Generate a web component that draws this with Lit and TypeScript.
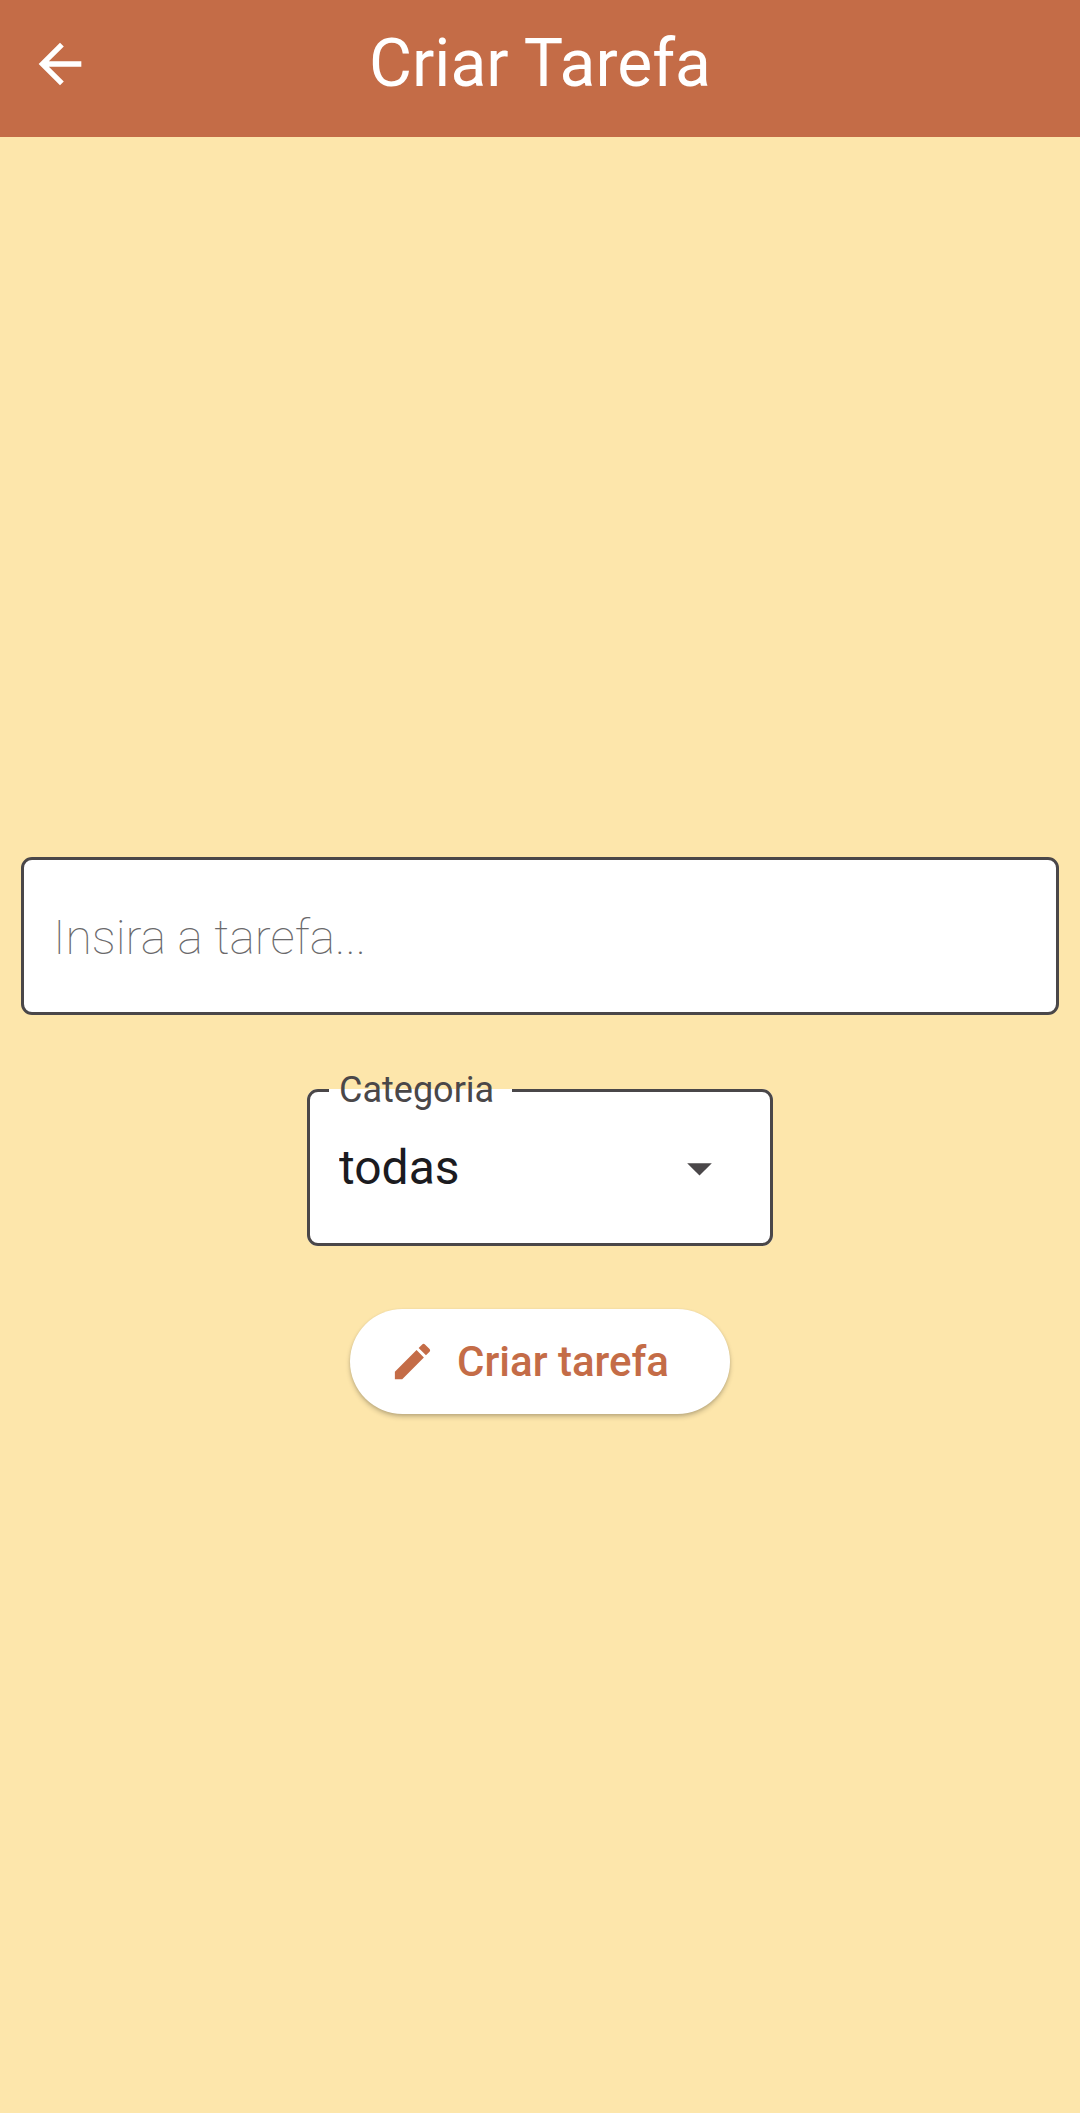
import { LitElement, html, css } from "lit";
import { customElement, state } from "lit/decorators.js";

@customElement("app-root")
export class AppRoot extends LitElement {
  static styles = css`
    :host {
      display: flex;
      flex-direction: column;
      min-height: 100vh;
      background: #fde6ab;
      color: #1b1b1f;
      font-family: Roboto, "Liberation Sans", sans-serif;
    }
    * {
      box-sizing: border-box;
    }
    .bar {
      display: grid;
      grid-template-columns: 64px 1fr 64px;
      align-items: center;
      padding: 20px 28px 30px;
      background: #c46c47;
      color: #fff;
    }
    .back {
      display: grid;
      padding: 0;
      border: 0;
      background: none;
      color: inherit;
      cursor: pointer;
    }
    .back svg {
      width: 64px;
      height: 64px;
    }
    .title {
      margin: 0;
      font-size: 66px;
      font-weight: 400;
      line-height: 87px;
      text-align: center;
    }
    .form {
      flex: 1;
      display: flex;
      flex-direction: column;
      align-items: center;
      justify-content: center;
      padding: 21px 21px 0;
    }
    .task {
      width: 100%;
      height: 158px;
      padding: 2px 29px 0;
      border: 3px solid #4a4749;
      border-radius: 11px;
      background: #fff;
      color: inherit;
      font: 400 48px Roboto, "Liberation Sans", sans-serif;
    }
    .task::placeholder {
      color: #6a696b;
      font-weight: 100;
      opacity: 1;
    }
    .category {
      min-width: 466px;
      margin: 54px 0 0;
      padding: 0 0 0 19px;
      border: 3px solid #4a4749;
      border-radius: 11px;
      background: #fff;
    }
    .legend {
      padding: 0 18px 0 10px;
      color: #4a4749;
      font-size: 36px;
      line-height: 42px;
    }
    .picker {
      display: grid;
      align-items: center;
    }
    .picker > * {
      grid-area: 1 / 1;
    }
    .select {
      appearance: none;
      width: 100%;
      height: 132px;
      padding: 0 120px 20px 10px;
      border: 0;
      background: none;
      color: inherit;
      font: 400 48px Roboto, "Liberation Sans", sans-serif;
    }
    .caret {
      justify-self: end;
      width: 63px;
      height: 63px;
      margin: 0 39px 18px 0;
      color: #4a4749;
      pointer-events: none;
    }
    .submit {
      display: flex;
      align-items: center;
      gap: 21px;
      height: 105px;
      margin-top: 63px;
      padding: 0 61px 0 39px;
      border: 0;
      border-radius: 53px;
      background: #fff;
      box-shadow: 0 3px 5px rgba(0, 0, 0, 0.2), 0 1px 3px rgba(0, 0, 0, 0.1);
      color: #c46c47;
      font: 500 42px Roboto, "Liberation Sans", sans-serif;
      cursor: pointer;
    }
    .submit svg {
      width: 47px;
      height: 47px;
    }
  `;

  @state() private task = "";
  @state() private category = "todas";

  private onTask(e: Event) {
    this.task = (e.target as HTMLInputElement).value;
  }

  private onCategory(e: Event) {
    this.category = (e.target as HTMLSelectElement).value;
  }

  private onSubmit(e: Event) {
    e.preventDefault();
    this.dispatchEvent(
      new CustomEvent("create-task", { detail: { task: this.task, category: this.category } })
    );
  }

  render() {
    return html`
      <header class="bar">
        <button class="back" type="button" aria-label="Voltar">
          <svg viewBox="0 0 24 24" fill="currentColor" aria-hidden="true">
            <path d="M7.825 13L13.425 18.6L12 20L4 12L12 4L13.425 5.4L7.825 11H20V13Z" />
          </svg>
        </button>
        <h1 class="title">Criar Tarefa</h1>
      </header>
      <form class="form" @submit=${this.onSubmit}>
        <input
          class="task"
          type="text"
          aria-label="Tarefa"
          placeholder="Insira a tarefa..."
          .value=${this.task}
          @input=${this.onTask}
        />
        <fieldset class="category">
          <legend class="legend"><label for="category">Categoria</label></legend>
          <div class="picker">
            <select class="select" id="category" @change=${this.onCategory}>
              <option value="todas">todas</option>
            </select>
            <svg class="caret" viewBox="0 0 24 24" fill="currentColor" aria-hidden="true">
              <path d="M7.3 10L12 14.7L16.7 10Z" />
            </svg>
          </div>
        </fieldset>
        <button class="submit" type="submit">
          <svg viewBox="0 0 24 24" fill="currentColor" aria-hidden="true">
            <path
              d="M3 17.25V21h3.75L17.81 9.94l-3.75-3.75L3 17.25zM20.71 7.04c.39-.39.39-1.02 0-1.41l-2.34-2.34c-.39-.39-1.02-.39-1.41 0l-1.83 1.83 3.75 3.75 1.83-1.83z"
            />
          </svg>
          <span>Criar tarefa</span>
        </button>
      </form>
    `;
  }
}
